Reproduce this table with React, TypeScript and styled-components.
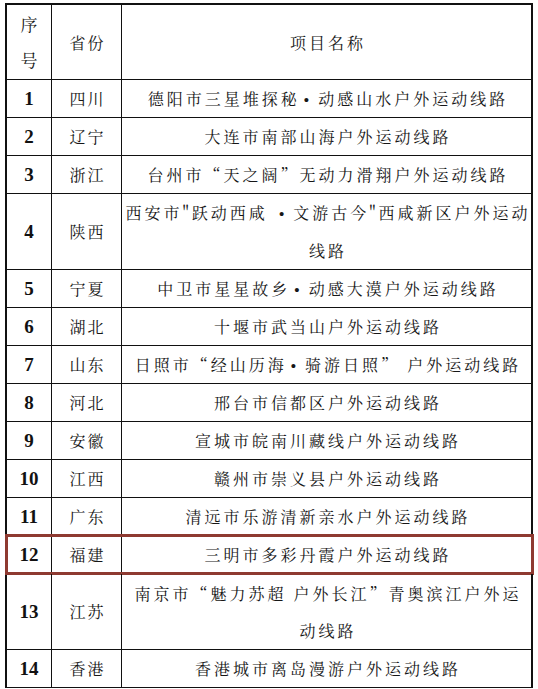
import styled, { createGlobalStyle } from 'styled-components';

const GlobalStyle = createGlobalStyle`
  html, body {
    margin: 0;
    padding: 0;
    background: #ffffff;
  }
  body {
    font-family: "Noto Serif CJK SC", "Noto Sans CJK SC", "Liberation Serif", serif;
    color: #161616;
  }
`

type Route = {
  no: number
  province: string
  lines: string[]
  highlight?: boolean
}

const routes: Route[] = [
  { no: 1, province: '四川', lines: ['德阳市三星堆探秘•动感山水户外运动线路'] },
  { no: 2, province: '辽宁', lines: ['大连市南部山海户外运动线路'] },
  { no: 3, province: '浙江', lines: ['台州市“天之阔”无动力滑翔户外运动线路'] },
  { no: 4, province: '陕西', lines: ['西安市"跃动西咸 •文游古今"西咸新区户外运动', '线路'] },
  { no: 5, province: '宁夏', lines: ['中卫市星星故乡•动感大漠户外运动线路'] },
  { no: 6, province: '湖北', lines: ['十堰市武当山户外运动线路'] },
  { no: 7, province: '山东', lines: ['日照市“经山历海•骑游日照” 户外运动线路'] },
  { no: 8, province: '河北', lines: ['邢台市信都区户外运动线路'] },
  { no: 9, province: '安徽', lines: ['宣城市皖南川藏线户外运动线路'] },
  { no: 10, province: '江西', lines: ['赣州市崇义县户外运动线路'] },
  { no: 11, province: '广东', lines: ['清远市乐游清新亲水户外运动线路'] },
  { no: 12, province: '福建', lines: ['三明市多彩丹霞户外运动线路'], highlight: true },
  { no: 13, province: '江苏', lines: ['南京市“魅力苏超 户外长江”青奥滨江户外运', '动线路'] },
  { no: 14, province: '香港', lines: ['香港城市离岛漫游户外运动线路'] },
]

// the bullet is drawn from a latin font so it comes out as a solid dot
const renderLine = (line: string) => {
  const parts = line.split('•')
  return parts.map((part, i) => (
    <span key={i}>
      {part}
      {i < parts.length - 1 && <Dot>•</Dot>}
    </span>
  ))
}

const App = () => {
  return (
    <Page lang="zh-CN">
      <GlobalStyle />
      <Table>
        <Row $height={75}>
          <HeadCell>
            <Stacked>序<br />号</Stacked>
          </HeadCell>
          <HeadCell>省份</HeadCell>
          <HeadCell $wide>项目名称</HeadCell>
        </Row>

        {routes.map(item => (
          <Row key={item.no} $height={item.lines.length > 1 ? 76 : 38} $highlight={item.highlight}>
            <NumberCell>{item.no}</NumberCell>
            <ProvinceCell>{item.province}</ProvinceCell>
            <NameCell>
              {item.lines.map(line => (
                <NameLine key={line}>{renderLine(line)}</NameLine>
              ))}
            </NameCell>
          </Row>
        ))}
      </Table>
    </Page>
  )
}

export default App


const Page = styled.div`
  width: 538px;
  padding: 3px 0 0 5px;
  box-sizing: border-box;
`

const Table = styled.div`
  width: 528px;
  display: flex;
  flex-direction: column;
  border-top: 2px solid #111;
  border-left: 2px solid #111;
  box-sizing: border-box;
`

const Row = styled.div<{ $height: number; $highlight?: boolean }>`
  position: relative;
  display: grid;
  grid-template-columns: 45px 70px 1fr;
  height: ${p => p.$height}px;

  ${p => p.$highlight && `
    &::after {
      content: '';
      position: absolute;
      left: -2px;
      right: -1px;
      top: -2px;
      bottom: -1px;
      border: 3px solid #8e3a31;
      pointer-events: none;
    }
  `}
`

const Cell = styled.div`
  display: flex;
  align-items: center;
  justify-content: center;
  text-align: center;
  border-right: 1.5px solid #111;
  border-bottom: 1.5px solid #111;
  box-sizing: border-box;
  overflow: hidden;
`

const HeadCell = styled(Cell)<{ $wide?: boolean }>`
  font-size: 16px;
  letter-spacing: ${p => (p.$wide ? '3px' : '2px')};
  padding-left: ${p => (p.$wide ? '3px' : '2px')};
  ${p => p.$wide && 'border-right-width: 2px;'}
`

const Stacked = styled.span`
  line-height: 36px;
  font-size: 17px;
`

const NumberCell = styled(Cell)`
  font-family: "Liberation Serif", "Times New Roman", serif;
  font-weight: 700;
  font-size: 19px;
  color: #111;
`

const ProvinceCell = styled(Cell)`
  font-size: 16px;
  letter-spacing: 2px;
  padding-left: 2px;
`

const NameCell = styled(Cell)`
  flex-direction: column;
  font-size: 16px;
  letter-spacing: 3px;
  padding-left: 3px;
  border-right-width: 2px;
`

const NameLine = styled.div`
  white-space: nowrap;
  line-height: 37px;
`

const Dot = styled.span`
  font-family: "Liberation Sans", Arial, sans-serif;
  font-size: 15px;
  margin: 0 6px 0 4px;
`
